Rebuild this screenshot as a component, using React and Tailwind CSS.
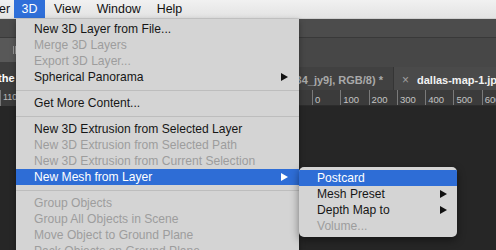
import React from 'react';

const font = { fontFamily: '"Liberation Sans", Arial, sans-serif' };

const Arrow = ({ light }) => (
  <svg width="7" height="8" viewBox="0 0 7 8" className="shrink-0">
    <path d="M0 0 L7 4 L0 8 Z" fill={light ? '#ffffff' : '#111111'} />
  </svg>
);

const Item = ({ label, disabled, active, sub }) => (
  <div
    className={`h-[16px] flex items-center pl-[18px] pr-[11px] ${
      active ? 'bg-[#2e6dd6] text-white' : disabled ? 'text-[#9d9d9d]' : 'text-[#161616]'
    }`}
  >
    <span className="flex-1 whitespace-nowrap overflow-hidden">{label}</span>
    {sub && <Arrow light={active} />}
  </div>
);

const Sep = () => (
  <div className="h-[10px] flex items-center">
    <div className="h-px w-full bg-[#bdbdbd]" />
  </div>
);

const rulerMarks = ['0', '100', '200', '300', '400', '500', '600'];

export default function App() {
  return (
    <div className="relative w-[496px] h-[250px] overflow-hidden bg-[#262626]" style={font}>
      {/* mac menu bar */}
      <div className="h-[19px] flex items-center bg-gradient-to-b from-[#f1f1f1] to-[#e3e3e3] border-b border-[#cfcfcf] text-[12.4px] text-[#111]">
        <span className="ml-[-1px] pr-[4px]">er</span>
        <span className="h-full w-[31px] flex items-center justify-center bg-[#2f6fd9] text-white">3D</span>
        <span className="ml-[9px]">View</span>
        <span className="ml-[16px]">Window</span>
        <span className="ml-[16px]">Help</span>
      </div>

      {/* photoshop workspace */}
      <div className="flex h-[231px]">
        <div className="w-[16px] shrink-0 flex flex-col overflow-hidden">
          <div className="h-[19px] bg-[#4a4a4a] border-b border-[#3a3a3a]" />
          <div className="h-[24px] bg-[#585858] flex items-center justify-end">
            <div className="w-[3px] h-[8px] border-x border-[#9a9a9a]" />
          </div>
          <div className="h-[28px] bg-[#3e3e3e] flex items-center pt-[5px]">
            <span className="text-[11px] font-bold text-white whitespace-nowrap ml-[-2px]">the map</span>
          </div>
          <div className="h-[16px] bg-[#3b3b3b] flex items-center border-l border-[#777]">
            <span className="text-[9px] text-[#bbb] ml-[2px]">110</span>
          </div>
          <div className="flex-1 bg-[#262626]" />
        </div>
        <div className="flex-1 flex flex-col">
          <div className="h-[19px] bg-[#4c4c4c] border-b border-[#393939]" />
          <div className="h-[29px] bg-[#474747]" />
          <div className="h-[23px] flex bg-[#3d3d3d]">
            <div className="w-[378px] bg-[#414141] flex items-center justify-end pr-[10px] pt-[3px] border-r border-[#353535]">
              <span className="text-[11px] font-bold text-[#a9a9a9] whitespace-nowrap">434_jy9j, RGB/8) *</span>
            </div>
            <div className="flex-1 bg-[#4a4a4a] flex items-center pl-[8px] pt-[3px] whitespace-nowrap overflow-hidden">
              <span className="text-[12px] text-[#a0a0a0]">×</span>
              <span className="ml-[8px] text-[11px] font-bold text-[#f2f2f2]">dallas-map-1.jpg</span>
            </div>
          </div>
          <div className="h-[16px] bg-[#3b3b3b] flex border-b border-[#2c2c2c]">
            <div className="w-[296px] shrink-0" />
            {rulerMarks.map((m) => (
              <div key={m} className="w-[28.3px] shrink-0 border-l border-[#7a7a7a] relative">
                <span className="absolute left-[2px] top-[3px] text-[9.5px] text-[#c4c4c4]">{m}</span>
              </div>
            ))}
          </div>
          <div className="flex-1 bg-[#262626]" />
        </div>
      </div>

      {/* 3D menu */}
      <div className="absolute left-[16px] top-[19px] w-[283px] h-[240px] bg-[#d4d4d4] pt-[2px] text-[12.1px] shadow-[0_2px_6px_rgba(0,0,0,0.35)]">
        <Item label="New 3D Layer from File..." />
        <Item label="Merge 3D Layers" disabled />
        <Item label="Export 3D Layer..." disabled />
        <Item label="Spherical Panorama" sub />
        <Sep />
        <Item label="Get More Content..." />
        <Sep />
        <Item label="New 3D Extrusion from Selected Layer" />
        <Item label="New 3D Extrusion from Selected Path" disabled />
        <Item label="New 3D Extrusion from Current Selection" disabled />
        <Item label="New Mesh from Layer" active sub />
        <Sep />
        <Item label="Group Objects" disabled />
        <Item label="Group All Objects in Scene" disabled />
        <Item label="Move Object to Ground Plane" disabled />
        <Item label="Pack Objects on Ground Plane" disabled />
      </div>

      {/* submenu */}
      <div className="absolute left-[299px] top-[167px] w-[158px] rounded-[5px] bg-[#d4d4d4] py-[3px] text-[12.1px] shadow-[0_3px_8px_rgba(0,0,0,0.45)] overflow-hidden">
        <div className="h-[16px] flex items-center pl-[18px] bg-[#2e6dd6] text-white">Postcard</div>
        <div className="h-[16px] flex items-center pl-[18px] pr-[10px] text-[#161616]">
          <span className="flex-1">Mesh Preset</span>
          <Arrow />
        </div>
        <div className="h-[16px] flex items-center pl-[18px] pr-[10px] text-[#161616]">
          <span className="flex-1">Depth Map to</span>
          <Arrow />
        </div>
        <div className="h-[16px] flex items-center pl-[18px] text-[#9d9d9d]">Volume...</div>
      </div>
    </div>
  );
}
